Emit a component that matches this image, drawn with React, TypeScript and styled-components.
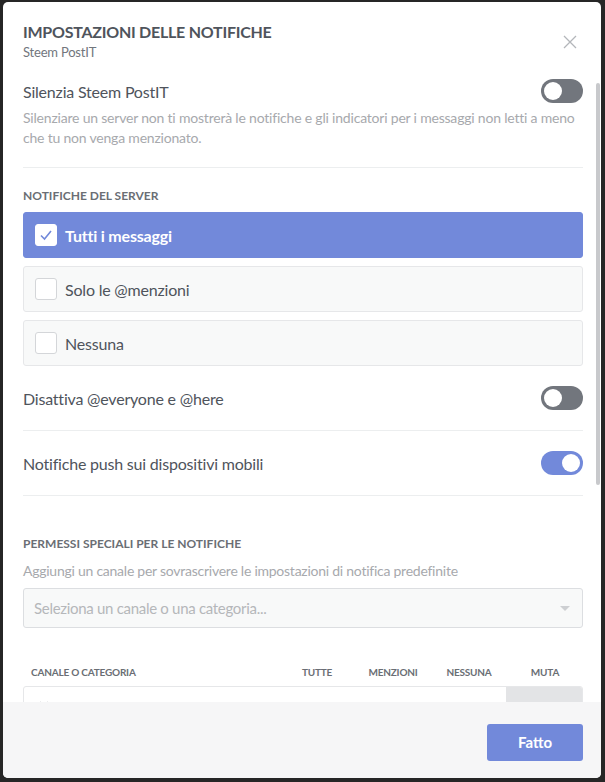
import React from "react";
import styled, { createGlobalStyle } from "styled-components";

const Global = createGlobalStyle`
  html, body { margin: 0; padding: 0; }
  body {
    background: #262626;
    font-family: Lato, "Open Sans", "Noto Sans", sans-serif;
    width: 605px;
    height: 782px;
    overflow: hidden;
  }
`;

const Modal = styled.div`
  position: relative;
  margin: 2px 4px 0 3px;
  width: 598px;
  height: 776px;
  background: #ffffff;
  border-radius: 5px;
  display: flex;
  flex-direction: column;
  overflow: hidden;
`;

const Header = styled.div`
  position: relative;
  padding: 20px 20px 10px 20px;
  display: flex;
  flex-direction: column;
`;

const Title = styled.div`
  font-size: 16px;
  line-height: 20px;
  font-weight: 700;
  letter-spacing: -0.25px;
  color: #4f545c;
  text-transform: uppercase;
`;

const Subtitle = styled.div`
  margin-top: 2px;
  font-size: 13px;
  line-height: 16px;
  letter-spacing: -0.2px;
  color: #72767d;
`;

const Close = styled.button`
  position: absolute;
  right: 23px;
  top: 32px;
  width: 16px;
  height: 16px;
  padding: 0;
  border: none;
  background: transparent;
  display: flex;
  align-items: center;
  justify-content: center;
`;

const Scroller = styled.div`
  position: relative;
  flex: 1;
  overflow: hidden;
  padding: 8px 18px 0 20px;
`;

const ScrollThumb = styled.div`
  position: absolute;
  right: 1px;
  top: 13px;
  width: 4px;
  height: 402px;
  border-radius: 2px;
  background: #c8c9cc;
`;

const Row = styled.div<{ $h?: number; $top?: number }>`
  display: flex;
  align-items: center;
  justify-content: space-between;
  height: ${(p) => p.$h ?? 24}px;
  margin-top: ${(p) => p.$top ?? 0}px;
`;

const Label = styled.div`
  font-size: 16px;
  letter-spacing: -0.2px;
  color: #4f545c;
`;

const Description = styled.div`
  margin-top: 4px;
  font-size: 14px;
  line-height: 20px;
  letter-spacing: -0.2px;
  color: #a7a9ad;
`;

const Divider = styled.div<{ $top: number; $bottom: number }>`
  height: 1px;
  background: #eceeef;
  margin-top: ${(p) => p.$top}px;
  margin-bottom: ${(p) => p.$bottom}px;
`;

const SectionTitle = styled.div<{ $top?: number }>`
  margin-top: ${(p) => p.$top ?? 0}px;
  font-size: 12px;
  line-height: 16px;
  font-weight: 700;
  color: #6a6e74;
  text-transform: uppercase;
`;

const Options = styled.div`
  margin-top: 8px;
  display: flex;
  flex-direction: column;
  gap: 8px;
`;

const Option = styled.div<{ $selected?: boolean }>`
  height: 46px;
  box-sizing: border-box;
  display: flex;
  align-items: center;
  gap: 8px;
  padding-left: 11px;
  border-radius: 3px;
  background: ${(p) => (p.$selected ? "#7289da" : "#f8f9f9")};
  border: 1px solid ${(p) => (p.$selected ? "#7289da" : "#e6e7e9")};
  color: ${(p) => (p.$selected ? "#ffffff" : "#4f545c")};
  font-size: 16px;
  letter-spacing: -0.2px;
  font-weight: ${(p) => (p.$selected ? 700 : 400)};
`;

const Check = styled.div<{ $checked?: boolean }>`
  width: 22px;
  height: 22px;
  box-sizing: border-box;
  border-radius: 3px;
  background: #ffffff;
  border: 1px solid ${(p) => (p.$checked ? "#ffffff" : "#d4d6d9")};
  display: flex;
  align-items: center;
  justify-content: center;
`;

const ToggleTrack = styled.div<{ $on?: boolean }>`
  width: 42px;
  height: 24px;
  box-sizing: border-box;
  border-radius: 12px;
  background: ${(p) => (p.$on ? "#7289da" : "#72767d")};
  padding: 3px;
  display: flex;
  justify-content: ${(p) => (p.$on ? "flex-end" : "flex-start")};
`;

const Knob = styled.div`
  width: 18px;
  height: 18px;
  border-radius: 50%;
  background: #ffffff;
`;

const Hint = styled.div`
  margin-top: 9px;
  font-size: 14px;
  line-height: 20px;
  letter-spacing: -0.25px;
  color: #a7a9ad;
`;

const Select = styled.div`
  margin-top: 7px;
  height: 40px;
  box-sizing: border-box;
  border: 1px solid #dcdee1;
  border-radius: 3px;
  background: #f8f9f9;
  display: flex;
  align-items: center;
  justify-content: space-between;
  padding: 0 12px 0 10px;
  font-size: 15px;
  letter-spacing: -0.3px;
  color: #b5b7ba;
`;

const Caret = styled.div`
  width: 0;
  height: 0;
  border-left: 5px solid transparent;
  border-right: 5px solid transparent;
  border-top: 5px solid #cdcfd2;
`;

const TableHead = styled.div`
  margin-top: 36px;
  display: grid;
  grid-template-columns: 1fr 76px 76px 76px 76px;
  height: 16px;
  align-items: center;
  font-size: 10px;
  font-weight: 700;
  letter-spacing: -0.2px;
  color: #6a6e74;
  text-transform: uppercase;
`;

const HeadCell = styled.div<{ $left?: boolean }>`
  text-align: ${(p) => (p.$left ? "left" : "center")};
  padding-left: ${(p) => (p.$left ? "8px" : "0")};
`;

const TableRow = styled.div`
  margin-top: 6px;
  display: grid;
  grid-template-columns: 1fr 76px 76px 76px 76px;
  height: 50px;
  border: 1px solid #e6e7e9;
  border-radius: 3px;
  overflow: hidden;
`;

const ChannelCell = styled.div`
  display: flex;
  align-items: flex-start;
  gap: 8px;
  padding: 11px 0 0 14px;
  font-size: 16px;
  line-height: 20px;
  font-weight: 700;
  color: #4f545c;
`;

const Cell = styled.div<{ $muted?: boolean }>`
  background: ${(p) => (p.$muted ? "#e3e4e6" : "#ffffff")};
`;

const Footer = styled.div`
  height: 76px;
  flex-shrink: 0;
  background: #f6f6f7;
  display: flex;
  align-items: center;
  justify-content: flex-end;
  padding: 0 18px 0 20px;
`;

const Button = styled.button`
  width: 96px;
  height: 37px;
  border: none;
  border-radius: 3px;
  background: #7289da;
  color: #ffffff;
  font-family: inherit;
  font-size: 15px;
  font-weight: 700;
  margin-top: 4px;
`;

const Toggle = ({ on }: { on?: boolean }) => (
  <ToggleTrack $on={on}>
    <Knob />
  </ToggleTrack>
);

export default function App() {
  return (
    <>
      <Global />
      <Modal>
        <Header>
          <Title>Impostazioni delle notifiche</Title>
          <Subtitle>Steem PostIT</Subtitle>
          <Close aria-label="close">
            <svg width="14" height="14" viewBox="0 0 14 14">
              <path d="M1 1 L13 13 M13 1 L1 13" stroke="#b3b6ba" strokeWidth="1.3" />
            </svg>
          </Close>
        </Header>
        <Scroller>
          <ScrollThumb />
          <Row $h={26}>
            <Label>Silenzia Steem PostIT</Label>
            <Toggle />
          </Row>
          <Description>
            Silenziare un server non ti mostrerà le notifiche e gli indicatori per i messaggi non letti a meno
            che tu non venga menzionato.
          </Description>
          <Divider $top={19} $bottom={20} />
          <SectionTitle>Notifiche del server</SectionTitle>
          <Options>
            <Option $selected>
              <Check $checked>
                <svg width="14" height="12" viewBox="0 0 14 12">
                  <path d="M2 6.5 L5.5 10 L12 2" fill="none" stroke="#7289da" strokeWidth="1.6" />
                </svg>
              </Check>
              Tutti i messaggi
            </Option>
            <Option>
              <Check />
              Solo le @menzioni
            </Option>
            <Option>
              <Check />
              Nessuna
            </Option>
          </Options>
          <Row $top={20}>
            <Label>Disattiva @everyone e @here</Label>
            <Toggle />
          </Row>
          <Divider $top={20} $bottom={20} />
          <Row>
            <Label>Notifiche push sui dispositivi mobili</Label>
            <Toggle on />
          </Row>
          <Divider $top={20} $bottom={0} />
          <SectionTitle $top={40}>Permessi speciali per le notifiche</SectionTitle>
          <Hint>Aggiungi un canale per sovrascrivere le impostazioni di notifica predefinite</Hint>
          <Select>
            Seleziona un canale o una categoria...
            <Caret />
          </Select>
          <TableHead>
            <HeadCell $left>Canale o categoria</HeadCell>
            <HeadCell>Tutte</HeadCell>
            <HeadCell>Menzioni</HeadCell>
            <HeadCell>Nessuna</HeadCell>
            <HeadCell>Muta</HeadCell>
          </TableHead>
          <TableRow>
            <ChannelCell>
              <svg width="12" height="12" viewBox="0 0 12 12">
                <path d="M2 4 L6 8 L10 4" fill="none" stroke="#b9bbbe" strokeWidth="1.5" />
              </svg>
              informazioni
            </ChannelCell>
            <Cell />
            <Cell />
            <Cell />
            <Cell $muted />
          </TableRow>
        </Scroller>
        <Footer>
          <Button>Fatto</Button>
        </Footer>
      </Modal>
    </>
  );
}
